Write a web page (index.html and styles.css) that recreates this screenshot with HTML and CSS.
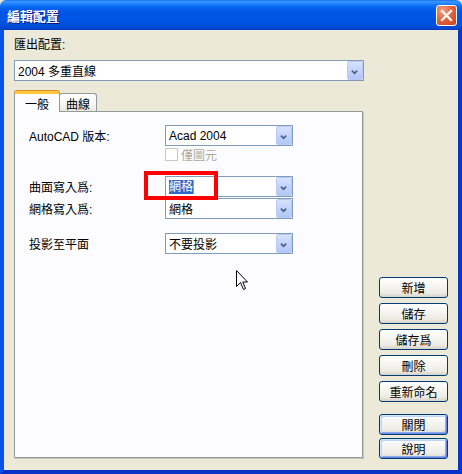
FILE: index.html
```html
<!DOCTYPE html>
<html lang="zh-Hant">
<head>
<meta charset="utf-8">
<title>編輯配置</title>
<link rel="stylesheet" href="styles.css">
</head>
<body>
<div class="window">
  <div class="titlebar">
    <span class="title">編輯配置</span>
    <span class="close">
      <svg width="13" height="13" viewBox="0 0 13 13"><path d="M2 2 L11 11 M11 2 L2 11" stroke="#fff" stroke-width="2.2" stroke-linecap="square"/></svg>
    </span>
  </div>
  <div class="frame">
    <div class="top-label">匯出配置:</div>
    <div class="combo combo-wide">
      <span class="combo-text">2004 多重直線</span>
      <span class="combo-btn"><svg width="16" height="19" viewBox="0 0 16 19"><path d="M4.5 8.5 L7.5 11.5 L10.5 8.5" stroke="#4D6185" stroke-width="2" fill="none"/></svg></span>
    </div>
    <div class="main">
      <div class="tab-area">
        <div class="tabs">
          <div class="tab active">一般</div>
          <div class="tab">曲線</div>
        </div>
        <div class="panel">
          <div class="row">
            <span class="lbl">AutoCAD 版本:</span>
            <div class="combo">
              <span class="combo-text">Acad 2004</span>
              <span class="combo-btn"><svg width="16" height="19" viewBox="0 0 16 19"><path d="M4.5 8.5 L7.5 11.5 L10.5 8.5" stroke="#4D6185" stroke-width="2" fill="none"/></svg></span>
            </div>
          </div>
          <div class="check-row">
            <span class="checkbox"></span>
            <span class="check-text">僅圖元</span>
          </div>
          <div class="row row-gap">
            <span class="lbl">曲面寫入爲:</span>
            <div class="combo">
              <span class="combo-text"><span class="sel">網格</span><span class="caret"></span></span>
              <span class="combo-btn"><svg width="16" height="19" viewBox="0 0 16 19"><path d="M4.5 8.5 L7.5 11.5 L10.5 8.5" stroke="#4D6185" stroke-width="2" fill="none"/></svg></span>
            </div>
          </div>
          <div class="row row-tight">
            <span class="lbl">網格寫入爲:</span>
            <div class="combo">
              <span class="combo-text">網格</span>
              <span class="combo-btn"><svg width="16" height="19" viewBox="0 0 16 19"><path d="M4.5 8.5 L7.5 11.5 L10.5 8.5" stroke="#4D6185" stroke-width="2" fill="none"/></svg></span>
            </div>
          </div>
          <div class="row row-gap2">
            <span class="lbl">投影至平面</span>
            <div class="combo">
              <span class="combo-text">不要投影</span>
              <span class="combo-btn"><svg width="16" height="19" viewBox="0 0 16 19"><path d="M4.5 8.5 L7.5 11.5 L10.5 8.5" stroke="#4D6185" stroke-width="2" fill="none"/></svg></span>
            </div>
          </div>
        </div>
      </div>
      <div class="buttons">
        <div class="btn">新增</div>
        <div class="btn">儲存</div>
        <div class="btn">儲存爲</div>
        <div class="btn">刪除</div>
        <div class="btn">重新命名</div>
        <div class="btn default sep">關閉</div>
        <div class="btn default close-gap">說明</div>
      </div>
    </div>
  </div>
  <div class="highlight-box"></div>
  <svg class="cursor" width="13" height="21" viewBox="0 0 13 21"><path d="M0.5 0.5 L0.5 16.5 L4.5 12.5 L7.5 19.5 L9.5 18.5 L6.8 12 L11.5 12 Z" fill="#fff" stroke="#000" stroke-width="1"/></svg>
</div>
</body>
</html>
```
FILE: styles.css
```css
html, body {
  margin: 0;
  padding: 0;
  background: #ECE9D8;
}
body {
  font-family: "Liberation Sans", "Noto Sans CJK TC", sans-serif;
  font-size: 12px;
  color: #000;
}
.window {
  position: relative;
  width: 462px;
  height: 474px;
  display: flex;
  flex-direction: column;
  overflow: hidden;
}
.titlebar {
  height: 30px;
  flex: none;
  display: flex;
  align-items: center;
  justify-content: space-between;
  padding: 0 5px 0 7px;
  box-sizing: border-box;
  border-radius: 6px 6px 0 0;
  background: linear-gradient(to bottom, #0A5FE8 0, #3D95FF 1px, #2C8CFF 3px, #1279FB 5px, #0562ED 8px, #0056E6 12px, #0054E3 20px, #0050DA 25px, #0047D0 28px, #003CC2 30px);
}
.title {
  color: #fff;
  font-family: "Noto Sans CJK TC", sans-serif;
  font-weight: bold;
  font-size: 13px;
  letter-spacing: 0;
  text-shadow: 1px 1px 0 #0A1883;
  margin-top: 1px;
}
.close {
  width: 21px;
  height: 21px;
  box-sizing: border-box;
  border: 1px solid #fff;
  border-radius: 3px;
  background: radial-gradient(circle at 30% 25%, #F29E80 0, #E5663F 45%, #CB3E1B 100%);
  display: flex;
  align-items: center;
  justify-content: center;
  margin-top: 1px;
}
.frame {
  flex: 1;
  display: flex;
  flex-direction: column;
  background: #ECE9D8;
  border-left: 4px solid #0553E8;
  border-right: 4px solid #0038D0;
  border-bottom: 4px solid #0831C8;
  padding: 8px 10px 11px 10px;
  min-height: 0;
}
.top-label {
  height: 14px;
  line-height: 14px;
}
.combo {
  display: flex;
  align-items: center;
  height: 21px;
  box-sizing: border-box;
  border: 1px solid #7F9DB9;
  background: #fff;
  padding-left: 3px;
}
.combo-wide {
  margin-top: 8px;
  width: 350px;
}
.combo-text {
  flex: 1;
  display: flex;
  align-items: center;
  white-space: nowrap;
}
.combo-btn {
  width: 16px;
  height: 19px;
  flex: none;
  box-sizing: border-box;
  border: 1px solid #BAC9F3;
  border-radius: 2px;
  background: linear-gradient(to bottom, #D6E2FD 0, #C3D4FB 50%, #B2C6F7 100%);
  display: flex;
}
.main {
  flex: 1;
  margin-top: 10px;
  display: flex;
  gap: 16px;
  align-items: flex-end;
}
.tab-area {
  width: 349px;
  height: 100%;
  display: flex;
  flex-direction: column;
}
.tabs {
  height: 20px;
  flex: none;
  display: flex;
  align-items: flex-end;
}
.tab {
  width: 38px;
  height: 18px;
  box-sizing: border-box;
  border: 1px solid #919B9C;
  border-bottom: none;
  border-radius: 3px 3px 0 0;
  background: linear-gradient(to bottom, #FFFFFF 0, #F7F7F4 60%, #EAE8DF 100%);
  display: flex;
  align-items: center;
  justify-content: center;
  padding-top: 1px;
  margin-left: -1px;
}
.tab.active {
  width: 46px;
  height: 21px;
  margin-left: 0;
  margin-bottom: -1px;
  position: relative;
  z-index: 1;
  background: #FCFCFE;
  border-top: 3px solid #FFC83C;
  box-shadow: 0 -1px 0 #E68B2C;
  padding-top: 0;
}
.panel {
  flex: 1;
  margin-bottom: 1px;
  box-sizing: border-box;
  background: #FCFCFE;
  border: 1px solid #919B9C;
  box-shadow: 1px 1px 0 #C9C6B6;
  padding: 13px 0 0 14px;
  display: flex;
  flex-direction: column;
}
.row {
  display: flex;
  align-items: center;
}
.row .combo {
  width: 128px;
}
.lbl {
  width: 136px;
  flex: none;
}
.check-row {
  margin-top: 2px;
  margin-left: 136px;
  display: flex;
  align-items: center;
  height: 13px;
}
.checkbox {
  width: 13px;
  height: 13px;
  box-sizing: border-box;
  border: 1px solid #CAC8BB;
  background: #fff;
}
.check-text {
  margin-left: 3px;
  color: #ACA899;
}
.row-gap {
  margin-top: 15px;
}
.row-tight {
  margin-top: 1px;
}
.row-gap2 {
  margin-top: 14px;
}
.sel {
  background: #316AC5;
  color: #fff;
  line-height: 14px;
}
.caret {
  width: 1px;
  height: 14px;
  background: #C89A3A;
}
.buttons {
  width: 69px;
  display: flex;
  flex-direction: column;
  gap: 5px;
}
.btn {
  height: 21px;
  box-sizing: border-box;
  border: 1px solid #003C74;
  border-radius: 3px;
  background: linear-gradient(to bottom, #FFFFFF 0, #F5F4EF 45%, #ECEBE4 80%, #D6D0C5 100%);
  display: flex;
  align-items: center;
  justify-content: center;
}
.btn.default {
  box-shadow: inset 1px 1px 0 #CEE7FF, inset -1px -1px 0 #6982EE, inset 2px 2px 0 #BCD4F6, inset -2px -2px 0 #89ADE4;
}
.sep {
  margin-top: 7px;
}
.close-gap {
  margin-top: -2px;
}
.highlight-box {
  position: absolute;
  left: 144px;
  top: 171px;
  width: 74px;
  height: 29px;
  box-sizing: border-box;
  border: 4px solid #FF0000;
}
.cursor {
  position: absolute;
  left: 236px;
  top: 270px;
}
```
